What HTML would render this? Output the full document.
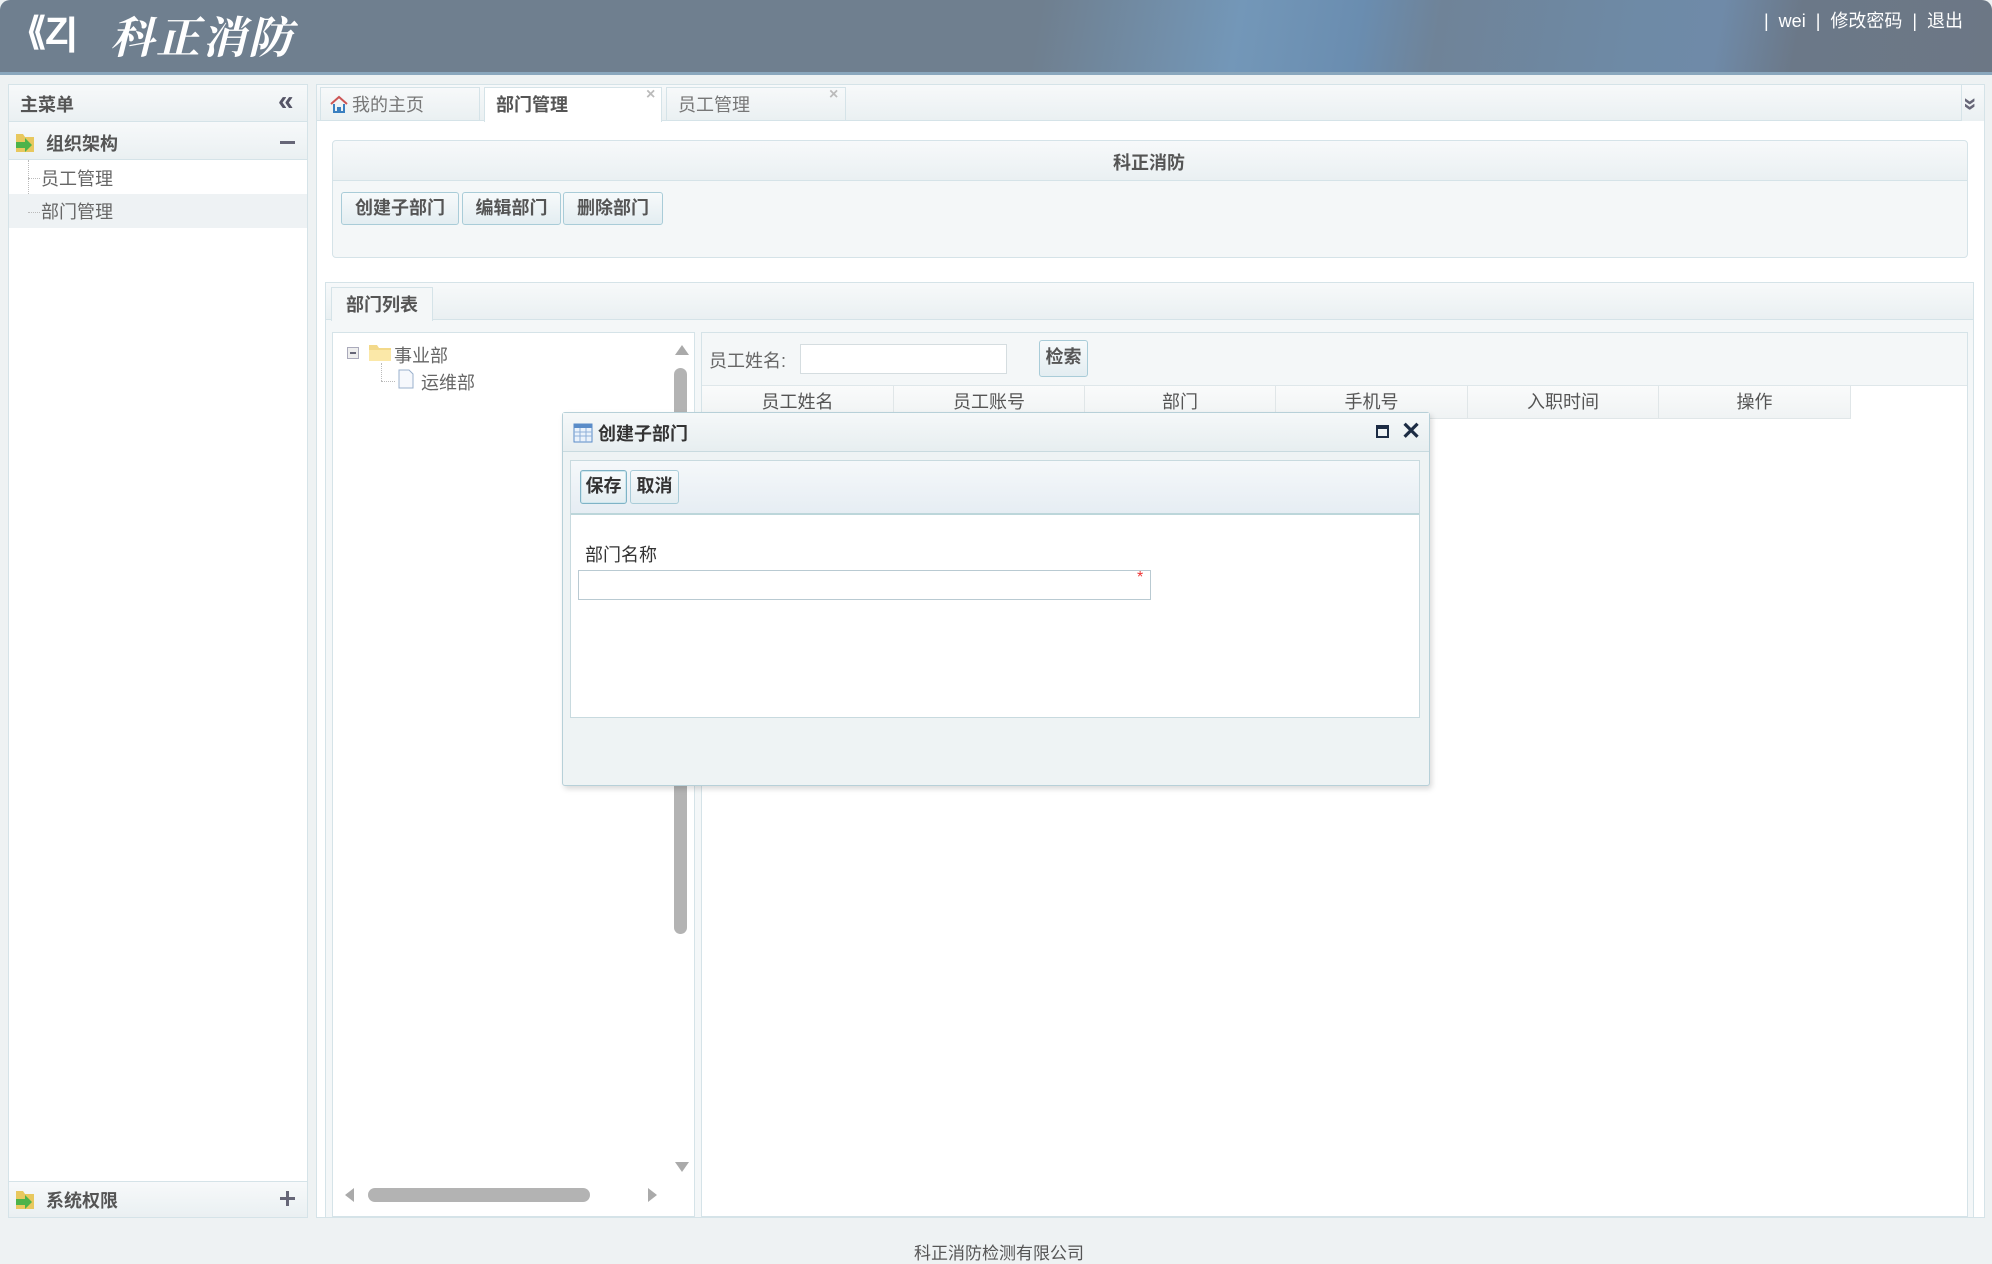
<!DOCTYPE html>
<html><head><meta charset="utf-8"><style>
*{box-sizing:border-box;margin:0;padding:0}
body{width:1992px;height:1252px;overflow:hidden;background:#eef2f3;font-family:"Liberation Sans","Noto Sans CJK SC",sans-serif;font-size:18px;color:#444;position:relative}
.a{position:absolute}
.hdr{left:0;top:0;width:1992px;height:75px;border-radius:10px 10px 0 0;background:linear-gradient(100deg,#6f7f8f 0%,#6f7f8f 52%,#7397b8 62%,#6a8db0 68%,#6f8398 72%,#6e8aa6 82%,#6f8aa8 86%,#6b7888 90%,#6c7785 100%);border-bottom:3px solid #8aa7bd}
.bx{background:#fff;border:1px solid #d5e3e8}
.grad{background:linear-gradient(#f7f9fa,#eaf0f2)}
.btn{position:absolute;border:1px solid #a9ccd8;border-radius:3px;background:linear-gradient(#f7fafb,#e3edf1);font-weight:bold;color:#555;text-align:center;font-size:18px}
.th{position:absolute;top:0;height:33px;line-height:33px;text-align:center;color:#555;border-right:1px solid #e0e6e8}
</style></head><body>
<div class="a hdr"></div>
<div class="a" style="left:26px;top:13px;width:66px;height:38px;color:#fff;font-size:38px;line-height:38px;font-weight:bold;font-family:'Liberation Sans',sans-serif;letter-spacing:-2px">&#10218;Z|</div>
<div class="a" style="left:110px;top:8px;color:#fff;font-size:44px;line-height:52px;font-family:'Noto Serif CJK SC',serif;font-weight:bold;font-style:italic;letter-spacing:2px">科正消防</div>
<div class="a" style="left:1764px;top:10px;color:#fff;font-size:18px;line-height:22px;white-space:nowrap">|&nbsp;&nbsp;wei&nbsp;&nbsp;|&nbsp;&nbsp;修改密码&nbsp;&nbsp;|&nbsp;&nbsp;退出</div>

<!-- sidebar -->
<div class="a bx" style="left:8px;top:84px;width:300px;height:1134px"></div>
<div class="a grad" style="left:9px;top:85px;width:298px;height:37px;border-bottom:1px solid #d5e3e8"></div>
<div class="a" style="left:20px;top:91px;font-weight:bold;color:#555">主菜单</div>
<div class="a" style="left:278px;top:85px;font-size:28px;color:#556;font-weight:bold">«</div>
<div class="a grad" style="left:9px;top:122px;width:298px;height:38px;border-bottom:1px solid #d5e3e8"></div>
<svg class="a" style="left:14px;top:130px" width="24" height="24"><path d="M2 4h7l2 3h9v15H2z" fill="#e8c85e"/><path d="M2 12h9v-4l7 7-7 7v-4H2z" fill="#4cb34a"/></svg>
<div class="a" style="left:46px;top:130px;font-weight:bold;color:#555">组织架构</div>
<div class="a" style="left:280px;top:141px;width:15px;height:3px;background:#667"></div>
<div class="a" style="left:28px;top:160px;width:1px;height:52px;border-left:1px dotted #bbb"></div>
<div class="a" style="left:28px;top:178px;width:12px;border-top:1px dotted #bbb"></div>
<div class="a" style="left:9px;top:194px;width:298px;height:34px;background:#eef2f4"></div>
<div class="a" style="left:28px;top:212px;width:12px;border-top:1px dotted #bbb"></div>
<div class="a" style="left:41px;top:165px;color:#666">员工管理</div>
<div class="a" style="left:41px;top:198px;color:#666">部门管理</div>
<div class="a grad" style="left:9px;top:1181px;width:298px;height:36px;border-top:1px solid #d5e3e8"></div>
<svg class="a" style="left:14px;top:1187px" width="24" height="24"><path d="M2 4h7l2 3h9v15H2z" fill="#e8c85e"/><path d="M2 12h9v-4l7 7-7 7v-4H2z" fill="#4cb34a"/></svg>
<div class="a" style="left:46px;top:1187px;font-weight:bold;color:#555">系统权限</div>
<div class="a" style="left:280px;top:1197px;width:15px;height:3px;background:#667"></div>
<div class="a" style="left:286px;top:1191px;width:3px;height:15px;background:#667"></div>

<!-- main -->
<div class="a bx" style="left:316px;top:84px;width:1669px;height:1134px;border-color:#d5e3e8"></div>
<div class="a grad" style="left:317px;top:85px;width:1667px;height:36px;border-bottom:1px solid #d5e3e8"></div>
<div class="a grad" style="left:320px;top:87px;width:160px;height:34px;border:1px solid #d5e3e8"></div>
<svg class="a" style="left:330px;top:95px" width="18" height="18"><path d="M1 9L9 2l8 7" fill="none" stroke="#c55" stroke-width="2"/><path d="M4 9v8h10V9" fill="none" stroke="#3a7fc0" stroke-width="2"/><rect x="7" y="12" width="4" height="5" fill="#3a7fc0"/></svg>
<div class="a" style="left:352px;top:91px;color:#777">我的主页</div>
<div class="a" style="left:484px;top:87px;width:178px;height:35px;background:#fff;border:1px solid #d5e3e8;border-bottom:none"></div>
<div class="a" style="left:496px;top:91px;font-weight:bold;color:#555">部门管理</div>
<div class="a" style="left:646px;top:86px;color:#bbb;font-size:16px;font-weight:bold">×</div>
<div class="a grad" style="left:666px;top:87px;width:180px;height:34px;border:1px solid #d5e3e8"></div>
<div class="a" style="left:678px;top:91px;color:#777">员工管理</div>
<div class="a" style="left:829px;top:86px;color:#bbb;font-size:16px;font-weight:bold">×</div>
<div class="a grad" style="left:1961px;top:85px;width:23px;height:36px;border-left:1px solid #d5e3e8"></div>
<div class="a" style="left:1964px;top:90px;color:#667;font-size:24px;transform:rotate(90deg);font-weight:bold">»</div>

<div class="a bx" style="left:332px;top:140px;width:1636px;height:118px;border-radius:4px;background:#f4f7f8"></div>
<div class="a grad" style="left:333px;top:141px;width:1634px;height:40px;border-bottom:1px solid #d5e3e8;border-radius:4px 4px 0 0"></div>
<div class="a" style="left:1113px;top:149px;font-weight:bold;color:#555">科正消防</div>
<div class="btn" style="left:341px;top:192px;width:118px;height:33px;line-height:31px">创建子部门</div>
<div class="btn" style="left:462px;top:192px;width:99px;height:33px;line-height:31px">编辑部门</div>
<div class="btn" style="left:563px;top:192px;width:100px;height:33px;line-height:31px">删除部门</div>

<div class="a bx" style="left:325px;top:282px;width:1649px;height:936px;background:#f4f7f8"></div>
<div class="a grad" style="left:326px;top:283px;width:1647px;height:37px;border-bottom:1px solid #d5e3e8"></div>
<div class="a" style="left:331px;top:287px;width:102px;height:34px;background:#f4f7f8;border:1px solid #d5e3e8;border-bottom:none"></div>
<div class="a" style="left:346px;top:291px;font-weight:bold;color:#555">部门列表</div>

<div class="a bx" style="left:332px;top:332px;width:363px;height:885px"></div>
<div class="a" style="left:347px;top:347px;width:12px;height:12px;border:1px solid #aab;background:#eee"></div>
<div class="a" style="left:350px;top:352px;width:6px;height:2px;background:#667"></div>
<svg class="a" style="left:368px;top:342px" width="24" height="20"><path d="M1 3h8l2 3h12v13H1z" fill="#f3d98a"/><path d="M1 8h22v11H1z" fill="#fbe8a8"/></svg>
<div class="a" style="left:394px;top:342px;color:#666">事业部</div>
<div class="a" style="left:381px;top:363px;height:18px;border-left:1px dotted #bbb"></div>
<div class="a" style="left:381px;top:381px;width:14px;border-top:1px dotted #bbb"></div>
<svg class="a" style="left:398px;top:369px" width="16" height="20"><path d="M1 1h10l4 4v14H1z" fill="#f6f8fc" stroke="#9ab0cc"/></svg>
<div class="a" style="left:421px;top:369px;color:#666">运维部</div>
<div class="a" style="left:675px;top:345px;border:7px solid transparent;border-bottom:10px solid #aaa;border-top:none"></div>
<div class="a" style="left:674px;top:368px;width:13px;height:566px;background:#b3b3b3;border-radius:7px"></div>
<div class="a" style="left:675px;top:1162px;border:7px solid transparent;border-top:10px solid #aaa;border-bottom:none"></div>
<div class="a" style="left:345px;top:1188px;border:7px solid transparent;border-right:9px solid #aaa;border-left:none"></div>
<div class="a" style="left:368px;top:1188px;width:222px;height:14px;background:#b3b3b3;border-radius:7px"></div>
<div class="a" style="left:648px;top:1188px;border:7px solid transparent;border-left:9px solid #aaa;border-right:none"></div>

<div class="a bx" style="left:701px;top:332px;width:1267px;height:885px"></div>
<div class="a" style="left:702px;top:333px;width:1265px;height:53px;background:#f4f7f8;border-bottom:1px solid #dfe7ea"></div>
<div class="a" style="left:709px;top:347px;color:#666">员工姓名:</div>
<div class="a" style="left:800px;top:344px;width:207px;height:30px;background:#fff;border:1px solid #d5dde0"></div>
<div class="btn" style="left:1039px;top:340px;width:49px;height:37px;line-height:32px">检索</div>
<div class="a" style="left:702px;top:386px;width:1148px;height:33px;background:linear-gradient(#fafbfb,#f0f3f4);border-bottom:1px solid #e0e6e8">
<div class="th" style="left:0;width:192px">员工姓名</div>
<div class="th" style="left:192px;width:191px">员工账号</div>
<div class="th" style="left:383px;width:191px">部门</div>
<div class="th" style="left:574px;width:192px">手机号</div>
<div class="th" style="left:766px;width:191px">入职时间</div>
<div class="th" style="left:957px;width:192px">操作</div>
</div>

<!-- dialog -->
<div class="a" style="left:562px;top:412px;width:868px;height:374px;background:#eef3f4;border:1px solid #b7d0d8;box-shadow:2px 3px 6px rgba(0,0,0,.15);border-radius:3px"></div>
<div class="a" style="left:563px;top:413px;width:866px;height:39px;background:linear-gradient(#f5f8f9,#e7eef0);border-bottom:1px solid #c8dadf"></div>
<svg class="a" style="left:573px;top:423px" width="20" height="20"><rect x="1" y="1" width="18" height="18" fill="#eaf2fb" stroke="#5a8cc8"/><rect x="1" y="1" width="18" height="4" fill="#5a8cc8"/><path d="M1 9h18M1 13h18M7 5v14M13 5v14" stroke="#8fb0d8"/></svg>
<div class="a" style="left:598px;top:420px;font-weight:bold;color:#333">创建子部门</div>
<div class="a" style="left:1376px;top:425px;width:13px;height:13px;border:2px solid #1c2c44;border-top-width:4px"></div>
<div class="a" style="left:1401px;top:420px;font-size:24px;font-weight:bold;color:#1c2c44;line-height:24px">✕</div>
<div class="a" style="left:570px;top:460px;width:850px;height:258px;background:#fff;border:1px solid #c8dadf"></div>
<div class="a" style="left:571px;top:461px;width:848px;height:54px;background:linear-gradient(#f5f8fa,#e6edf3);border-bottom:2px solid #bcd6da"></div>
<div class="btn" style="left:580px;top:470px;width:47px;height:34px;line-height:30px;color:#333;border-color:#7fb3c6;box-shadow:inset 0 0 0 1px #cfe7ee">保存</div>
<div class="btn" style="left:630px;top:470px;width:49px;height:34px;line-height:30px;color:#333;border-color:#a9ccd8">取消</div>
<div class="a" style="left:585px;top:541px;color:#333">部门名称</div>
<div class="a" style="left:578px;top:570px;width:573px;height:30px;background:#fff;border:1px solid #b9cad2"></div>
<div class="a" style="left:1137px;top:569px;color:#e33;font-size:16px">*</div>

<div class="a" style="left:914px;top:1239px;color:#555;font-size:17px">科正消防检测有限公司</div>
</body></html>
